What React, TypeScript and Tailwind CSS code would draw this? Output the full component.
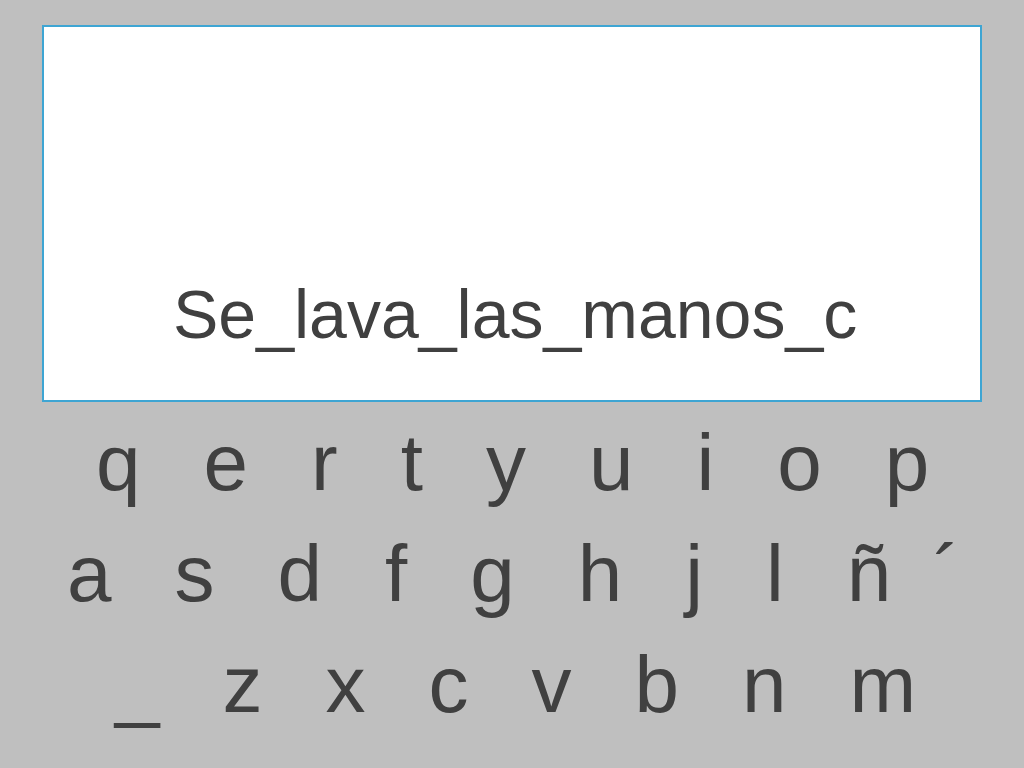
const filaUno = ["q", "e", "r", "t", "y", "u", "i", "o", "p"];
const filaDos = ["a", "s", "d", "f", "g", "h", "j", "l", "ñ"];
const filaTres = ["_", "z", "x", "c", "v", "b", "n", "m"];

function Fila({ letras, className, extra }: { letras: string[]; className: string; extra?: string }) {
  return (
    <div className={`flex h-[80px] items-start gap-[63px] leading-none ${className}`}>
      {letras.map((letra) => (
        <span key={letra}>{letra}</span>
      ))}
      {extra && <span className="-ml-[21px]">{extra}</span>}
    </div>
  );
}

export default function App() {
  return (
    <div
      className="h-[768px] w-[1024px] overflow-hidden bg-[#bfbfbf] pt-[25px] text-[#404040]"
      style={{ fontFamily: '"Liberation Sans", Arial, Helvetica, sans-serif' }}
    >
      <div className="ml-[42px] flex h-[377px] w-[940px] flex-col justify-end border-2 border-[#3ea5d3] bg-white pb-[52px] pl-[129px]">
        <div className="text-[68px] leading-none whitespace-pre">Se_lava_las_manos_c</div>
      </div>

      <div className="mt-[21px] flex flex-col gap-[31px] text-[80px]">
        <Fila letras={filaUno} className="pl-[96px]" />
        <Fila letras={filaDos} className="pl-[67px]" extra="´" />
        <Fila letras={filaTres} className="pl-[115px]" />
      </div>
    </div>
  );
}
